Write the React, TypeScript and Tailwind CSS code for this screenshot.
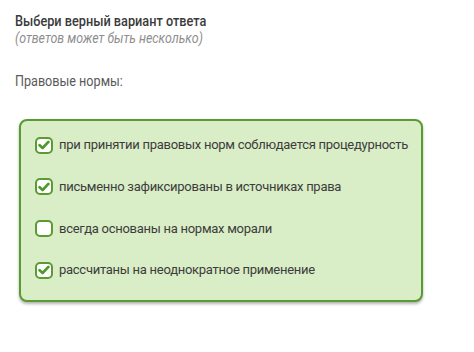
const options = [
  { text: 'при принятии правовых норм соблюдается процедурность', checked: true },
  { text: 'письменно зафиксированы в источниках права', checked: true },
  { text: 'всегда основаны на нормах морали', checked: false },
  { text: 'рассчитаны на неоднократное применение', checked: true },
];

const Check = ({ checked }: { checked: boolean }) => (
  <div className="w-[18px] h-[17px] shrink-0 rounded-[5px] border-2 border-[#5c9a34] bg-white flex items-center justify-center">
    {checked && (
      <svg width="12" height="10" viewBox="0 0 12 10">
        <path d="M1.6 5.2 L4.6 8 L10.4 1.9" fill="none" stroke="#4e9a2a" strokeWidth="2.7" strokeLinecap="round" strokeLinejoin="round" />
      </svg>
    )}
  </div>
);

export default function App() {
  return (
    <div className="w-[474px] h-[352px] bg-white px-[15px] pt-[12px] font-['Roboto',sans-serif]">
      <h1 className="text-[15.5px] leading-[18px] font-medium text-[#3a3a3a] whitespace-nowrap origin-left scale-x-[0.82]">Выбери верный вариант ответа</h1>
      <p className="text-[15px] leading-[17px] italic text-[#8e8e8e] whitespace-nowrap origin-left scale-x-[0.83]">(ответов может быть несколько)</p>
      <p className="mt-[25px] text-[14px] leading-[18px] text-[#5a5a5a] whitespace-nowrap origin-left scale-x-[0.9]">Правовые нормы:</p>
      <div className="mt-[29px] ml-[4px] w-[404px] h-[183px] rounded-[8px] border-2 border-[#5a9a32] bg-[#d9edc6] shadow-[0_2px_3px_rgba(0,0,0,0.3)] pl-[14px] pt-[15px] flex flex-col gap-[23.7px]">
        {options.map((o, i) => (
          <div key={i} className="flex items-center gap-[6px] h-[18px]">
            <Check checked={o.checked} />
            <span className="text-[13px] tracking-[-0.27px] text-[#3c3c3c] whitespace-nowrap">{o.text}</span>
          </div>
        ))}
      </div>
    </div>
  );
}
